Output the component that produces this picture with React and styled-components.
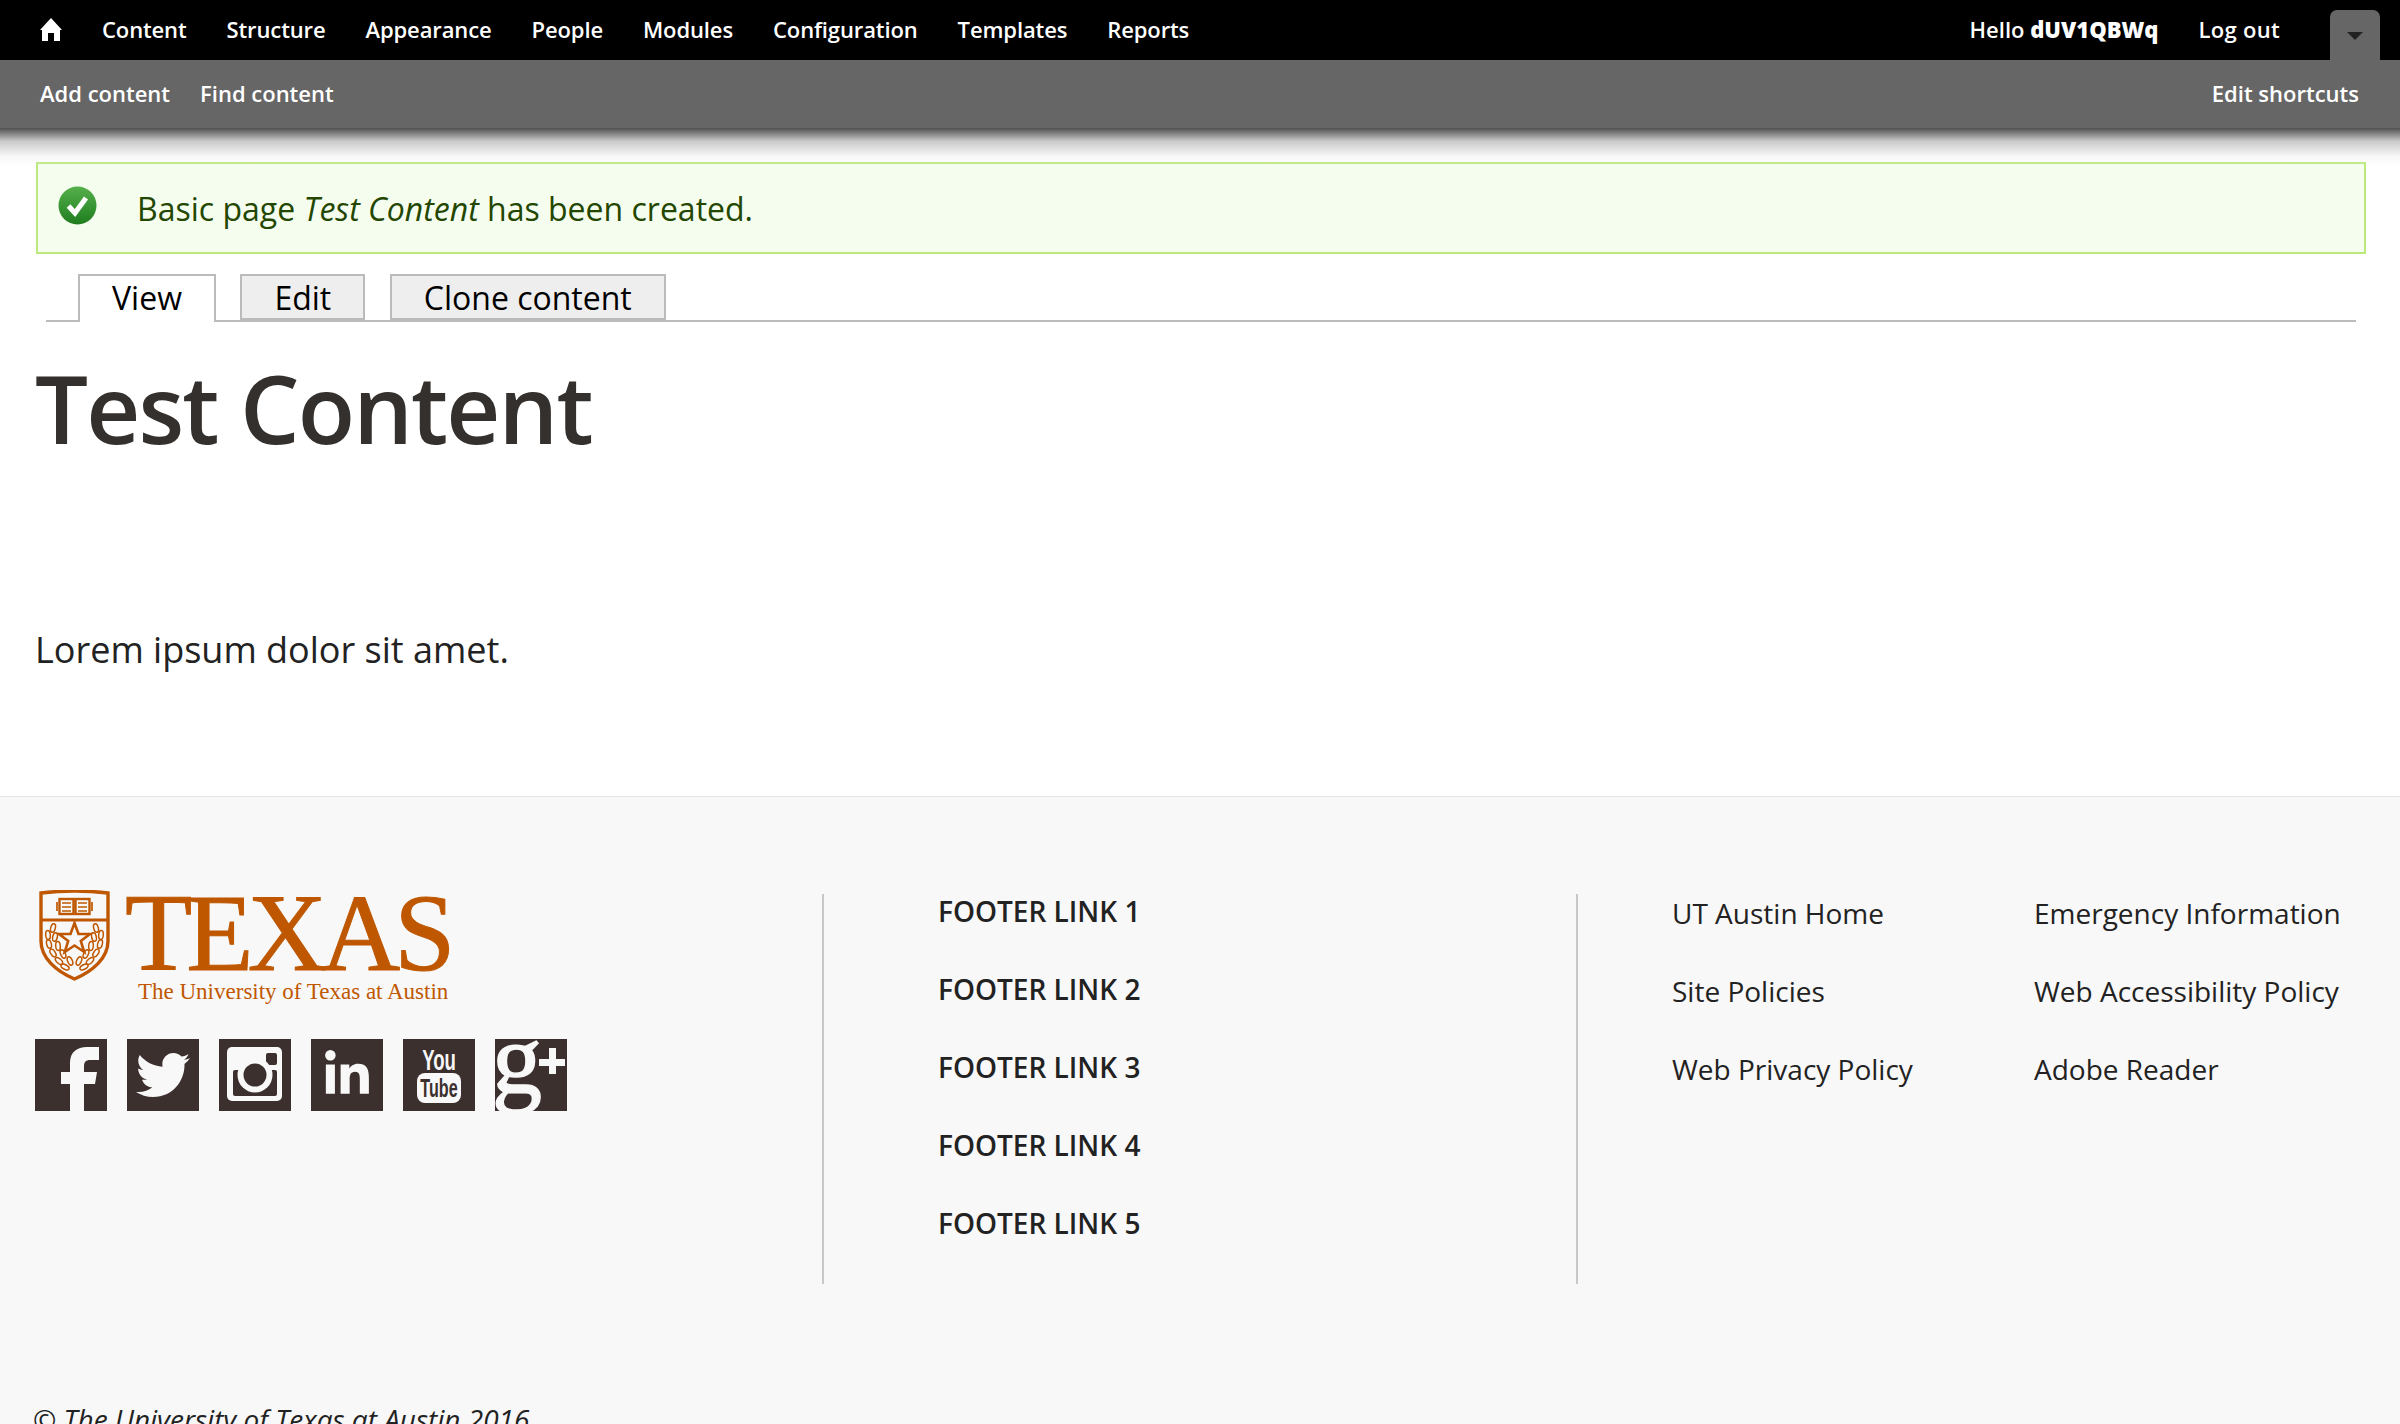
import React from 'react';
import styled, { createGlobalStyle } from 'styled-components';
import { FaTwitter, FaLinkedinIn } from 'react-icons/fa';

const GlobalStyle = createGlobalStyle`
  html, body {
    margin: 0;
    padding: 0;
    background: #fff;
    font-family: "Open Sans", "Noto Sans", sans-serif;
  }
  * {
    box-sizing: border-box;
  }
`;

const Page = styled.div`
  width: 2400px;
  height: 1424px;
  overflow: hidden;
  background: #fff;
`;

const TopBar = styled.div`
  height: 60px;
  background: #000;
  display: flex;
  align-items: center;
  padding: 0 20px 0 40px;
`;

const HomeLink = styled.span`
  display: flex;
  margin-right: 40px;
  margin-top: -1px;
`;

const NavList = styled.nav`
  display: flex;
  align-items: center;
  gap: ${props => props.$gap || 40}px;
`;

const NavLink = styled.a`
  color: #fff;
  font-size: 22px;
  font-weight: 600;
  line-height: 30px;
  letter-spacing: ${props => props.$spacing || 0}px;
  margin-top: -3px;
  white-space: nowrap;
`;

const UserArea = styled.div`
  margin-left: auto;
  display: flex;
  align-items: center;
  gap: 40px;
`;

const Handle = styled.div`
  width: 50px;
  height: 50px;
  margin-top: 10px;
  margin-left: 10px;
  background: #666;
  border-radius: 7px 7px 0 0;
  display: flex;
  justify-content: center;
  padding-top: 22px;
  &::after {
    content: '';
    width: 0;
    height: 0;
    border-left: 8px solid transparent;
    border-right: 8px solid transparent;
    border-top: 8px solid #222;
  }
`;

const SubBar = styled.div`
  position: relative;
  height: 68px;
  background: #666;
  display: flex;
  align-items: center;
  justify-content: space-between;
  padding: 0 41px 0 40px;
  &::after {
    content: '';
    position: absolute;
    left: 0;
    right: 0;
    top: 100%;
    height: 38px;
    background: linear-gradient(rgba(70, 70, 70, 0.95), rgba(150, 150, 150, 0.5) 35%, rgba(235, 235, 235, 0.35) 75%, rgba(255, 255, 255, 0));
  }
`;

const Main = styled.main`
  height: 668px;
  padding: 34px 34px 0 36px;
`;

const Message = styled.div`
  height: 92px;
  background: #f5fdee;
  border: 2px solid #bbe97c;
  color: #234600;
  font-size: 32px;
  display: flex;
  align-items: center;
  padding-left: 20px;
  gap: 40px;
  svg {
    margin-top: -6px;
  }
`;

const Tabs = styled.div`
  margin: 20px 10px 0;
  padding-left: 32px;
  height: 48px;
  border-bottom: 2px solid #bbb;
  display: flex;
  gap: 24.5px;
`;

const Tab = styled.a`
  height: ${props => (props.$active ? 48 : 46)}px;
  padding: 0 32px;
  border: 2px solid #bbb;
  border-bottom: ${props => (props.$active ? 'none' : '2px solid #bbb')};
  background: ${props => (props.$active ? '#fff' : '#eee')};
  color: #000;
  font-size: 32px;
  line-height: 44px;
  white-space: nowrap;
`;

const Title = styled.h1`
  margin: 26px 0 0 -1px;
  color: #33302e;
  font-size: 94px;
  font-weight: 600;
  line-height: 120px;
  letter-spacing: -1.9px;
`;

const Body = styled.p`
  margin: 156.5px 0 0 -1px;
  color: #222;
  font-size: 36px;
  line-height: 50px;
`;

const Footer = styled.footer`
  height: 628px;
  background: #f8f8f8;
  border-top: 1px solid #e5e5e5;
  padding: 97px 0 0 35px;
`;

const Columns = styled.div`
  display: flex;
  align-items: stretch;
  height: 390px;
`;

const BrandColumn = styled.div`
  width: 789px;
  border-right: 2px solid #c8c8c8;
`;

const LinkColumn = styled.div`
  width: 754px;
  padding-left: 114px;
  border-right: 2px solid #c8c8c8;
  display: flex;
  flex-direction: column;
  gap: 44px;
`;

const FooterStrong = styled.a`
  color: #222;
  font-size: 28px;
  font-weight: 600;
  line-height: 34px;
`;

const ResourceGrid = styled.div`
  padding: 2px 0 0 94px;
  display: grid;
  grid-template-columns: 362px auto;
  grid-auto-rows: 34px;
  row-gap: 44px;
`;

const ResourceLink = styled.a`
  color: #222;
  font-size: 28px;
  line-height: 34px;
  white-space: nowrap;
`;

const Logo = styled.div`
  display: flex;
  margin: -6px 0 0 4px;
  color: #bf5700;
  font-family: "Liberation Serif", serif;
  svg {
    margin-top: 2px;
  }
`;

const Wordmark = styled.div`
  margin-left: 15px;
  display: flex;
  flex-direction: column;
`;

const Texas = styled.span`
  font-size: 110px;
  line-height: 90px;
  letter-spacing: -6px;
  -webkit-text-stroke: 1px #bf5700;
`;

const Tagline = styled.span`
  margin: 1px 0 0 13px;
  font-size: 23px;
  line-height: 26px;
  white-space: nowrap;
`;

const SocialRow = styled.div`
  display: flex;
  gap: 20px;
  margin-top: 34px;
`;

const Social = styled.a`
  width: 72px;
  height: 72px;
  background: #3b302e;
  color: #f8f8f8;
  display: flex;
  align-items: center;
  justify-content: center;
  overflow: hidden;
  font-size: ${props => props.$size || 50}px;
`;

const Copyright = styled.p`
  margin: 115px 0 0 -2px;
  color: #222;
  font-size: 28px;
  font-style: italic;
  line-height: 40px;
`;

const HomeIcon = () => (
  <svg width="22" height="23" viewBox="0 0 22 23">
    <path d="M11 0l11 12h-2v11h-6v-8H8v8H2V12H0z" fill="#fff" />
  </svg>
);

const CheckIcon = () => (
  <svg width="39" height="39" viewBox="0 0 39 39">
    <defs>
      <linearGradient id="okGrad" x1="0" y1="0" x2="0" y2="1">
        <stop offset="0" stopColor="#55b04a" />
        <stop offset="1" stopColor="#1f7d1f" />
      </linearGradient>
    </defs>
    <circle cx="19.500" cy="19.500" r="19" fill="url(#okGrad)" />
    <path d="M10.500 20l6.500 7 11-15" fill="none" stroke="#fff" strokeWidth="5" />
  </svg>
);

const Leaf = ({ x, y, r }) => (
  <ellipse cx={x} cy={y} rx="2.300" ry="4.400" transform={`rotate(${r} ${x} ${y})`} fill="none" stroke="#bf5700" strokeWidth="1.500" />
);

const leaves = [
  [9, 45, -5], [10, 54, -15], [14, 63, -32], [20, 71, -48], [26, 77, -62],
  [14, 38, 15], [16, 47, 12], [19, 56, -5], [24, 64, -25], [31, 71, -25],
];

const Shield = () => (
  <svg width="71" height="92" viewBox="0 0 71 92">
    <path d="M2 3q33-4 67 0v48c0 17-15 30-33.500 38C17 81 2 68 2 51z" fill="none" stroke="#bf5700" strokeWidth="3.400" />
    <path d="M2 30h67" stroke="#bf5700" strokeWidth="3" />
    <rect x="20.500" y="9" width="14" height="15" fill="none" stroke="#bf5700" strokeWidth="2.400" />
    <rect x="36.500" y="9" width="14" height="15" fill="none" stroke="#bf5700" strokeWidth="2.400" />
    <path d="M23 13h9M23 17h9M23 21h9M39 13h9M39 17h9M39 21h9M18 12v9M53 12v9" stroke="#bf5700" strokeWidth="1.700" />
    <polygon points="35.500,33 39.500,44 51,44 41.800,51 45.200,62 35.500,55.500 25.800,62 29.200,51 20,44 31.500,44" fill="none" stroke="#bf5700" strokeWidth="2.600" />
    {leaves.map(([x, y, r], i) => (
      <React.Fragment key={i}>
        <Leaf x={x} y={y} r={r} />
        <Leaf x={71 - x} y={y} r={-r} />
      </React.Fragment>
    ))}
  </svg>
);

const FacebookIcon = () => (
  <svg width="72" height="72" viewBox="0 0 72 72">
    <path d="M35 72V45h-9V33h9v-9c0-11 7-16 17-16h12v13h-9c-4 0-6 2-6 6v6h13l-2 12H49v27z" fill="#f8f8f8" />
  </svg>
);

const InstagramIcon = () => (
  <svg width="72" height="72" viewBox="0 0 72 72">
    <rect x="8" y="8" width="55" height="54" rx="5" fill="#f8f8f8" />
    <rect x="14" y="31" width="44" height="26" rx="2" fill="#3b302e" />
    <rect x="47" y="14" width="11" height="12" rx="2" fill="#3b302e" />
    <circle cx="36" cy="36" r="17.500" fill="#f8f8f8" />
    <circle cx="36" cy="36" r="11.500" fill="#3b302e" />
  </svg>
);

const YoutubeIcon = () => (
  <svg width="72" height="72" viewBox="0 0 72 72">
    <text transform="translate(36 31) scale(.62 1)" textAnchor="middle" fill="#f8f8f8" fontFamily="Liberation Sans" fontSize="30" fontWeight="700">You</text>
    <rect x="14" y="34" width="44" height="30" rx="8" fill="#f8f8f8" />
    <text transform="translate(36 58) scale(.62 1)" textAnchor="middle" fill="#3b302e" fontFamily="Liberation Sans" fontSize="26" fontWeight="700">Tube</text>
  </svg>
);

const GooglePlusIcon = () => (
  <svg width="72" height="72" viewBox="0 0 72 72">
    <text x="-3" y="54" fill="#f8f8f8" stroke="#f8f8f8" strokeWidth="1.500" fontFamily="Liberation Serif" fontSize="100">g</text>
    <path d="M44 20h10V9h7v11h9v7h-9v8h-7v-8H44z" fill="#f8f8f8" />
  </svg>
);

const mainNav = ['Content', 'Structure', 'Appearance', 'People', 'Modules', 'Configuration', 'Templates', 'Reports'];
const footerLinks = ['FOOTER LINK 1', 'FOOTER LINK 2', 'FOOTER LINK 3', 'FOOTER LINK 4', 'FOOTER LINK 5'];
const resources = ['UT Austin Home', 'Emergency Information', 'Site Policies', 'Web Accessibility Policy', 'Web Privacy Policy', 'Adobe Reader'];

const App = () => (
  <Page>
    <GlobalStyle />
    <TopBar>
      <HomeLink><HomeIcon /></HomeLink>
      <NavList>
        {mainNav.map(item => <NavLink key={item} $spacing={-0.12}>{item}</NavLink>)}
      </NavList>
      <UserArea>
        <NavLink>Hello <strong>dUV1QBWq</strong></NavLink>
        <NavLink $spacing={0.3}>Log out</NavLink>
        <Handle />
      </UserArea>
    </TopBar>
    <SubBar>
      <NavList $gap={30}>
        <NavLink>Add content</NavLink>
        <NavLink>Find content</NavLink>
      </NavList>
      <NavLink>Edit shortcuts</NavLink>
    </SubBar>
    <Main>
      <Message>
        <CheckIcon />
        <span>Basic page <em>Test Content</em> has been created.</span>
      </Message>
      <Tabs>
        <Tab $active>View</Tab>
        <Tab>Edit</Tab>
        <Tab>Clone content</Tab>
      </Tabs>
      <Title>Test Content</Title>
      <Body>Lorem ipsum dolor sit amet.</Body>
    </Main>
    <Footer>
      <Columns>
        <BrandColumn>
          <Logo>
            <Shield />
            <Wordmark>
              <Texas>TEXAS</Texas>
              <Tagline>The University of Texas at Austin</Tagline>
            </Wordmark>
          </Logo>
          <SocialRow>
            <Social><FacebookIcon /></Social>
            <Social $size={54}><FaTwitter /></Social>
            <Social><InstagramIcon /></Social>
            <Social><FaLinkedinIn /></Social>
            <Social><YoutubeIcon /></Social>
            <Social><GooglePlusIcon /></Social>
          </SocialRow>
        </BrandColumn>
        <LinkColumn>
          {footerLinks.map(item => <FooterStrong key={item}>{item}</FooterStrong>)}
        </LinkColumn>
        <ResourceGrid>
          {resources.map(item => <ResourceLink key={item}>{item}</ResourceLink>)}
        </ResourceGrid>
      </Columns>
      <Copyright>© The University of Texas at Austin 2016</Copyright>
    </Footer>
  </Page>
);

export default App;
